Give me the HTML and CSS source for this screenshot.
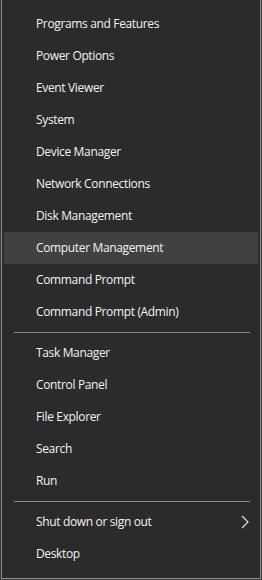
FILE: index.html
```html
<!DOCTYPE html>
<html>
<head>
<meta charset="utf-8">
<link rel="stylesheet" href="styles.css">
</head>
<body>
<div class="menu">
  <div class="group">
    <div class="item">Programs and Features</div>
    <div class="item">Power Options</div>
    <div class="item">Event Viewer</div>
    <div class="item">System</div>
    <div class="item">Device Manager</div>
    <div class="item">Network Connections</div>
    <div class="item">Disk Management</div>
    <div class="item active">Computer Management</div>
    <div class="item">Command Prompt</div>
    <div class="item">Command Prompt (Admin)</div>
  </div>
  <div class="sep"></div>
  <div class="group">
    <div class="item">Task Manager</div>
    <div class="item">Control Panel</div>
    <div class="item">File Explorer</div>
    <div class="item">Search</div>
    <div class="item">Run</div>
  </div>
  <div class="sep"></div>
  <div class="group">
    <div class="item sub"><span>Shut down or sign out</span>
      <svg class="chev" width="8" height="14" viewBox="0 0 8 14"><path d="M1 1 L7 7 L1 13" fill="none" stroke="#e6e6e6" stroke-width="1.1"/></svg>
    </div>
    <div class="item">Desktop</div>
  </div>
</div>
</body>
</html>
```

FILE: styles.css
```css
html, body {
  margin: 0;
  padding: 0;
}
body {
  background: #3a3a3a;
  width: 262px;
  height: 580px;
  overflow: hidden;
}
.menu {
  box-sizing: border-box;
  margin-left: 1px;
  width: 260px;
  height: 579px;
  background: #2b2b2b;
  border: 1px solid #8c8c8c;
  border-top: none;
  padding: 8px 2px 0 2px;
  font-family: "Open Sans", "Noto Sans", sans-serif;
  font-size: 12px;
  letter-spacing: -0.35px;
  color: #f2f2f2;
}
.item {
  box-sizing: border-box;
  height: 32px;
  display: flex;
  align-items: center;
  justify-content: space-between;
  padding-left: 32px;
  padding-right: 9px;
  padding-bottom: 2px;
  white-space: nowrap;
}
.item.active {
  background: #414141;
}
.sep {
  height: 1px;
  background: #8a8a8a;
  margin: 4px 8px 4px 10px;
}
.chev {
  display: block;
  margin-top: 2px;
}
```
